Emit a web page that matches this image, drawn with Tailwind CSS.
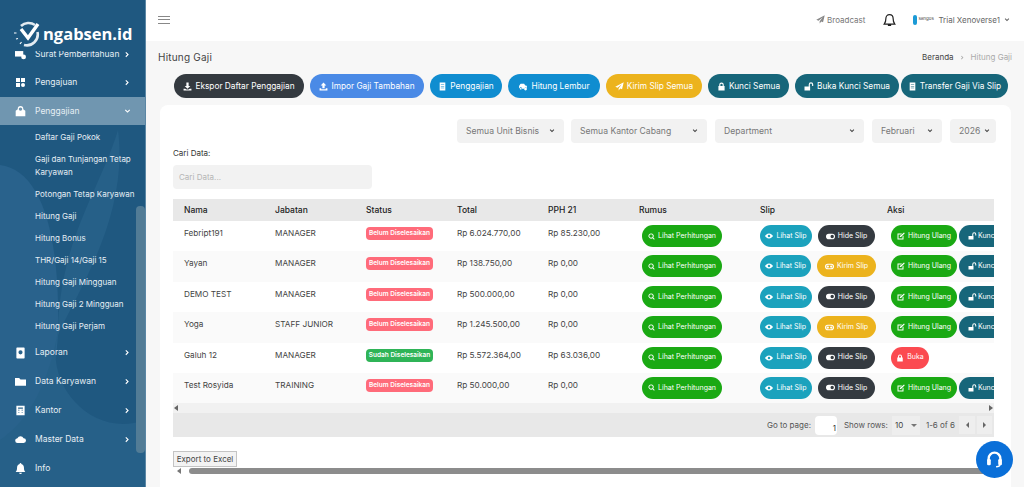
<!DOCTYPE html>
<html lang="id">
<head>
<meta charset="UTF-8">
<meta name="viewport" content="width=device-width, initial-scale=1.0">
<script src="https://cdn.jsdelivr.net/npm/@tailwindcss/browser@4"></script>
<title>Hitung Gaji</title>
</head>
<body class="font-['Inter','Liberation_Sans',sans-serif] bg-[#f7f7f7] overflow-hidden">

<svg class="hidden">
  <symbol id="i-download" viewBox="0 0 16 16"><path d="M6 1h4v6h3l-5 5-5-5h3zM1 12h3l2 1.500h4L12 12h3v3H1z"/></symbol>
  <symbol id="i-upload" viewBox="0 0 16 16"><path d="M8 1l5 5h-3v5H6V6H3zM1 11h3v2h8v-2h3v4H1z"/></symbol>
  <symbol id="i-receipt" viewBox="0 0 16 16"><path fill-rule="evenodd" d="M3 1h10v14H3zM5 4v1h6V4zM5 7v1h6V7zM5 10v1h6v-1z"/></symbol>
  <symbol id="i-car" viewBox="0 0 16 16"><path d="M3 4a1 1 0 0 1 1-1h6l2 3h1a2 2 0 0 1 2 2v2h-1.500a2 2 0 0 0-3 2H6a2 2 0 0 0-4-1H1V7z"/><circle cx="4" cy="12" r="1.500"/><circle cx="12.500" cy="12.500" r="2.500"/></symbol>
  <symbol id="i-plane" viewBox="0 0 16 16"><path d="M15.500 .5L.5 8.500l4 1.700L12 4 6.500 11v4l2.800-3.300 3.200 1.300z"/></symbol>
  <symbol id="i-lock" viewBox="0 0 16 16"><path fill-rule="evenodd" d="M4 7V5a4 4 0 0 1 8 0v2h1.500v8h-11V7zM6 7h4V5a2 2 0 0 0-4 0z"/></symbol>
  <symbol id="i-unlock" viewBox="0 0 16 16"><path d="M0 8h10v7H0zM7.500 8V4.500a4 4 0 0 1 8 0V7h-2V4.500a2 2 0 0 0-4 0V8z"/></symbol>
  <symbol id="i-search" viewBox="0 0 16 16"><path fill-rule="evenodd" d="M7 1a6 6 0 1 0 3.500 10.900l3.300 3.300 1.400-1.400-3.300-3.300A6 6 0 0 0 7 1zM7 3a4 4 0 1 1 0 8 4 4 0 0 1 0-8z"/></symbol>
  <symbol id="i-eye" viewBox="0 0 16 16"><path fill-rule="evenodd" d="M8 3c4 0 7 3.500 8 5-1 1.500-4 5-8 5S1 9.500 0 8c1-1.500 4-5 8-5zM8 5.500a2.500 2.500 0 1 0 0 5 2.500 2.500 0 0 0 0-5z"/></symbol>
  <symbol id="i-toggle-on" viewBox="0 0 16 16"><path fill-rule="evenodd" d="M5 3h6a5 5 0 0 1 0 10H5A5 5 0 0 1 5 3zM11 5a3 3 0 1 0 0 6 3 3 0 0 0 0-6z"/></symbol>
  <symbol id="i-toggle-off" viewBox="0 0 16 16"><path fill-rule="evenodd" d="M5 3h6a5 5 0 0 1 0 10H5A5 5 0 0 1 5 3zM5 5a3 3 0 0 0 0 6h6a3 3 0 0 0 0-6z"/><circle cx="5" cy="8" r="2"/><circle cx="11" cy="8" r="2"/></symbol>
  <symbol id="i-edit" viewBox="0 0 16 16"><path d="M1 3h9L8 5H3v8h8V9l2-2v8H1zM14 .8l1.500 1.500L8 10H5.800V7.800z"/></symbol>
  <symbol id="i-chev-r" viewBox="0 0 16 16"><path d="M5 2l6 6-6 6-1.800-1.800L7.400 8 3.200 3.800z"/></symbol>
  <symbol id="i-chev-d" viewBox="0 0 16 16"><path d="M2 5l6 6 6-6-1.800-1.800L8 7.400 3.800 3.200z"/></symbol>
  <symbol id="i-bell" viewBox="0 0 16 16"><path d="M8 0a1.200 1.200 0 0 1 1.200 1.300C11.500 1.900 13 4 13 6.500c0 4 1 5 2 6.500H1c1-1.500 2-2.500 2-6.500 0-2.500 1.500-4.600 3.800-5.200A1.200 1.200 0 0 1 8 0zM6 14h4a2 2 0 0 1-4 0z"/></symbol>
  <symbol id="i-mail" viewBox="0 0 16 16"><path fill-rule="evenodd" d="M1 7l3-2.400V4a4 4 0 0 1 8 0v.6L15 7v8H1zM8 2a2.500 2.500 0 1 0 0 5 2.500 2.500 0 0 0 0-5z"/></symbol>
  <symbol id="i-surat" viewBox="0 0 16 16"><path d="M0 3h12v8H0z"/><circle cx="12.500" cy="11.500" r="3.500"/></symbol>
  <symbol id="i-book" viewBox="0 0 16 16"><path fill-rule="evenodd" d="M3 0h10a1 1 0 0 1 1 1v14a1 1 0 0 1-1 1H3a1 1 0 0 1-1-1V1a1 1 0 0 1 1-1zM8 4a3 3 0 1 0 0 6 3 3 0 0 0 0-6z"/></symbol>
  <symbol id="i-building" viewBox="0 0 16 16"><path fill-rule="evenodd" d="M2 1h12v14H2zM4.500 3.500v2h7v-2zM4.500 7v1h2V7zM9.500 7v1h2V7zM4.500 10v1h2v-1zM9.500 10v1h2v-1z"/></symbol>
</svg>

<div class="flex h-[487px]">
  <!-- sidebar -->
  <aside class="relative w-[146px] shrink-0 h-full overflow-hidden bg-[#1f5880] border-r border-[#5b87a5] text-white">
    <svg class="absolute inset-0 w-full h-full" viewBox="0 0 145 487" preserveAspectRatio="none">
      <path d="M0 165C40 170 60 230 58 330 56 400 30 440 0 460z" fill="#29628c"/>
      <path d="M118 130C128 210 85 280 60 330 40 380 90 440 145 420V487H0V440C30 420 50 380 58 330 60 240 100 190 118 130z" fill="#266088"/>
    </svg>
    <div class="absolute right-0 top-[206px] w-[9px] h-[247px] rounded bg-[#527c96]"></div>

    <nav class="relative pt-[40px] text-[8.500px] text-[#e6eef4]">
      <a class="h-[28px] flex items-center"><svg class="shrink-0 w-[11px] h-[11px] ml-[15px] mr-[9px] fill-white"><use href="#i-surat"/></svg><span class="flex-1 whitespace-nowrap">Surat Pemberitahuan</span><svg class="shrink-0 w-[7px] h-[7px] mr-[14px] fill-white"><use href="#i-chev-r"/></svg></a>
      <a class="h-[29px] flex items-center"><span class="shrink-0 ml-[16px] mr-[10px] grid grid-cols-2 gap-[1px] w-[9px]"><i class="w-[4px] h-[4px] bg-white"></i><i class="w-[4px] h-[4px] bg-white"></i><i class="w-[4px] h-[4px] bg-white"></i><i class="w-[4px] h-[4px] bg-white rounded-full"></i></span><span class="flex-1">Pengajuan</span><svg class="shrink-0 w-[7px] h-[7px] mr-[14px] fill-white"><use href="#i-chev-r"/></svg></a>
      <a class="h-[28px] flex items-center bg-[#7096b0]"><svg class="shrink-0 w-[11px] h-[11px] ml-[15px] mr-[9px] fill-white"><use href="#i-mail"/></svg><span class="flex-1">Penggajian</span><svg class="shrink-0 w-[7px] h-[7px] mr-[14px] fill-white"><use href="#i-chev-d"/></svg></a>
      <ul class="pl-[35px] pr-[12px] pt-[1px] text-[8px] leading-[13px] pb-[1px]">
        <li class="py-[4.500px]">Daftar Gaji Pokok</li>
        <li class="py-[4.500px]">Gaji dan Tunjangan Tetap Karyawan</li>
        <li class="py-[4.500px] whitespace-nowrap">Potongan Tetap Karyawan</li>
        <li class="py-[4.500px]">Hitung Gaji</li>
        <li class="py-[4.500px]">Hitung Bonus</li>
        <li class="py-[4.500px]">THR/Gaji 14/Gaji 15</li>
        <li class="py-[4.500px]">Hitung Gaji Mingguan</li>
        <li class="py-[4.500px]">Hitung Gaji 2 Mingguan</li>
        <li class="py-[4.500px]">Hitung Gaji Perjam</li>
      </ul>
      <a class="h-[29px] flex items-center"><svg class="shrink-0 w-[11px] h-[12px] ml-[15px] mr-[9px] fill-white"><use href="#i-book"/></svg><span class="flex-1">Laporan</span><svg class="shrink-0 w-[7px] h-[7px] mr-[14px] fill-white"><use href="#i-chev-r"/></svg></a>
      <a class="h-[29px] flex items-center"><svg class="shrink-0 w-[11px] h-[11px] ml-[15px] mr-[9px] fill-white" viewBox="0 0 16 16"><path d="M0 3h6l2 2h8v9H0z"/></svg><span class="flex-1">Data Karyawan</span><svg class="shrink-0 w-[7px] h-[7px] mr-[14px] fill-white"><use href="#i-chev-r"/></svg></a>
      <a class="h-[29px] flex items-center"><svg class="shrink-0 w-[11px] h-[11px] ml-[15px] mr-[9px] fill-white"><use href="#i-building"/></svg><span class="flex-1">Kantor</span><svg class="shrink-0 w-[7px] h-[7px] mr-[14px] fill-white"><use href="#i-chev-r"/></svg></a>
      <a class="h-[29px] flex items-center"><svg class="shrink-0 w-[11px] h-[11px] ml-[15px] mr-[9px] fill-white" viewBox="0 0 16 16"><path d="M4 13a3.500 3.500 0 0 1-.5-7A5 5 0 0 1 12.500 6 3.500 3.500 0 0 1 12.500 13z"/></svg><span class="flex-1">Master Data</span><svg class="shrink-0 w-[7px] h-[7px] mr-[14px] fill-white"><use href="#i-chev-r"/></svg></a>
      <a class="h-[28px] flex items-center"><svg class="shrink-0 w-[11px] h-[11px] ml-[15px] mr-[9px] fill-white"><use href="#i-bell"/></svg><span class="flex-1">Info</span></a>
    </nav>

    <!-- logo sits over the scrolled menu -->
    <div class="absolute top-0 left-0 right-0 h-[51px] bg-[#1f5880] flex items-center pl-[13px] pt-[17px]">
      <svg class="w-[29px] h-[26px] shrink-0" viewBox="0 0 29 26" fill="none" stroke="#fff">
        <path d="M8 5a11 11 0 0 1 14-1M24.500 11A11 11 0 0 1 11 24" stroke-width="2.600" stroke="#e3ebf1"/>
        <path d="M8 8l7 9L25 3" stroke-width="3.400"/>
        <path d="M1 12h2.500M3 18l2-.5M7 23l1.500-2" stroke-width="1.200"/>
      </svg>
      <span class="font-['Open_Sans',sans-serif] font-bold text-[16.500px] leading-none text-white ml-[1px]">ngabsen.id</span>
    </div>
  </aside>

  <div class="flex-1 min-w-0 flex flex-col">
    <!-- top bar -->
    <header class="h-[41px] shrink-0 bg-white flex items-center pl-[12px] pr-[14px] pb-[2px]">
      <div class="w-[12px] flex flex-col gap-[2.500px]"><i class="h-[1px] bg-[#888]"></i><i class="h-[1px] bg-[#888]"></i><i class="h-[1px] bg-[#888]"></i></div>
      <div class="flex-1"></div>
      <svg class="w-[9px] h-[9px] fill-[#888]"><use href="#i-plane"/></svg>
      <span class="ml-[2px] text-[8px] text-[#777]">Broadcast</span>
      <svg class="ml-[18px] w-[13px] h-[14px]" viewBox="0 0 16 16" fill="none" stroke="#222" stroke-width="1.500"><path d="M8 1.500c2.800 0 4.500 2.200 4.500 5 0 4 1 5 2 6.500h-13c1-1.500 2-2.500 2-6.500 0-2.800 1.700-5 4.500-5zM6 14.500h4"/></svg>
      <span class="ml-[17px] w-[18px] flex items-center"><i class="shrink-0 w-[4px] h-[10px] rounded-sm bg-[#1b9ad6]"></i><span class="text-[4.500px] text-[#444] ml-[1px]">sangos</span></span>
      <span class="ml-[7px] text-[8px] text-[#666]">Trial Xenoverse1</span>
      <svg class="ml-[4px] w-[6px] h-[6px] fill-[#666]"><use href="#i-chev-d"/></svg>
    </header>

    <main class="flex-1 min-h-0 px-[13px] pl-[14px]">
      <div class="h-[33px] flex items-center justify-between pb-[1px]">
        <h1 class="-ml-[2px] text-[10px] text-[#444] tracking-[.2px]">Hitung Gaji</h1>
        <div class="flex items-center text-[8px] -mr-[1px]"><span class="text-[#444]">Beranda</span><svg class="mx-[6px] w-[5px] h-[5px] fill-[#aaa]"><use href="#i-chev-r"/></svg><span class="text-[#aaa]">Hitung Gaji</span></div>
      </div>

      <!-- action buttons -->
      <div class="flex ml-[14px] h-[24px] text-[8.300px] text-white whitespace-nowrap">
        <a class="w-[130px] rounded-full bg-[#343a40] flex items-center justify-center gap-[3px]"><svg class="w-[9px] h-[9px] fill-white"><use href="#i-download"/></svg>Ekspor Daftar Penggajian</a>
        <a class="w-[114px] ml-[6px] rounded-full bg-[#4a8ae6] flex items-center justify-center gap-[3px]"><svg class="w-[9px] h-[9px] fill-white"><use href="#i-upload"/></svg>Impor Gaji Tambahan</a>
        <a class="w-[72px] ml-[6px] rounded-full bg-[#108dd0] flex items-center justify-center gap-[3px]"><svg class="w-[9px] h-[9px] fill-white"><use href="#i-receipt"/></svg>Penggajian</a>
        <a class="w-[92px] ml-[6px] rounded-full bg-[#108dd0] flex items-center justify-center gap-[3px]"><svg class="w-[10px] h-[9px] fill-white"><use href="#i-car"/></svg>Hitung Lembur</a>
        <a class="w-[96px] ml-[6px] rounded-full bg-[#ecb31d] flex items-center justify-center gap-[3px]"><svg class="w-[9px] h-[9px] fill-white"><use href="#i-plane"/></svg>Kirim Slip Semua</a>
        <a class="w-[81px] ml-[6px] rounded-full bg-[#17667a] flex items-center justify-center gap-[3px]"><svg class="w-[9px] h-[9px] fill-white"><use href="#i-lock"/></svg>Kunci Semua</a>
        <a class="w-[104px] ml-[6px] rounded-full bg-[#17667a] flex items-center justify-center gap-[3px]"><svg class="w-[10px] h-[9px] fill-white"><use href="#i-unlock"/></svg>Buka Kunci Semua</a>
        <a class="w-[107px] ml-[2px] rounded-full bg-[#17667a] flex items-center justify-center gap-[3px]"><svg class="w-[9px] h-[9px] fill-white"><use href="#i-receipt"/></svg>Transfer Gaji Via Slip</a>
      </div>

      <!-- card -->
      <section class="relative mt-[7px] bg-white rounded-t-lg h-[400px] pl-[13px] pr-[15px] pt-[14px]">
        <div class="flex justify-end h-[24px] text-[8.600px] text-[#777]">
          <div class="w-[107px] rounded bg-[#f2f2f2] flex items-center justify-between px-[9px]">Semua Unit Bisnis<svg class="w-[6px] h-[6px] fill-[#444]"><use href="#i-chev-d"/></svg></div>
          <div class="w-[136px] ml-[7px] rounded bg-[#f2f2f2] flex items-center justify-between px-[9px]">Semua Kantor Cabang<svg class="w-[6px] h-[6px] fill-[#444]"><use href="#i-chev-d"/></svg></div>
          <div class="w-[149px] ml-[8px] rounded bg-[#f2f2f2] flex items-center justify-between px-[9px]">Department<svg class="w-[6px] h-[6px] fill-[#444]"><use href="#i-chev-d"/></svg></div>
          <div class="w-[70px] ml-[8px] rounded bg-[#f2f2f2] flex items-center justify-between px-[9px]">Februari<svg class="w-[6px] h-[6px] fill-[#444]"><use href="#i-chev-d"/></svg></div>
          <div class="w-[46px] ml-[8px] rounded bg-[#f2f2f2] flex items-center justify-between pl-[9px] pr-[6px]">2026<svg class="w-[6px] h-[6px] fill-[#444]"><use href="#i-chev-d"/></svg></div>
        </div>
        <label class="block mt-[4px] text-[8px] leading-[12px] text-[#333]">Cari Data:</label>
        <div class="mt-[6px] w-[199px] h-[24px] rounded bg-[#f2f2f2] flex items-center px-[6px] text-[8px] text-[#b5b5b5]">Cari Data...</div>

        <!-- table -->
        <div class="mt-[10px] w-[821px] overflow-hidden">
          <table class="w-[1000px] table-fixed border-collapse text-left text-[8.200px] text-[#444]">
            <colgroup><col class="w-[91px]"><col class="w-[91px]"><col class="w-[91px]"><col class="w-[91px]"><col class="w-[91px]"><col class="w-[121px]"><col class="w-[127px]"><col></colgroup>
            <thead>
              <tr class="h-[22px] bg-[#e8e8e8] text-[8.500px] text-[#222]">
                <th class="pl-[11px] font-medium">Nama</th><th class="pl-[11px] font-medium">Jabatan</th><th class="pl-[11px] font-medium">Status</th><th class="pl-[11px] font-medium">Total</th><th class="pl-[11px] font-medium">PPH 21</th><th class="pl-[11px] font-medium">Rumus</th><th class="pl-[11px] font-medium">Slip</th><th class="pl-[11px] font-medium">Aksi</th>
              </tr>
            </thead>
            <tbody id="rows"></tbody>
          </table>
        </div>

        <!-- inner scrollbar + pager -->
        <div class="w-[821px] h-[10px] bg-[#f1f1f1] flex items-center justify-between px-[1px]">
          <i class="border-y-[3px] border-y-transparent border-r-[4px] border-r-[#666]"></i>
          <i class="border-y-[3px] border-y-transparent border-l-[4px] border-l-[#666]"></i>
        </div>
        <div class="w-[821px] h-[24px] bg-[#e8e8e8] flex items-center justify-end text-[8px] text-[#555]">
          <span>Go to page:</span>
          <span class="ml-[4px] w-[22px] h-[19px] bg-white rounded-sm flex items-end justify-end pr-[1px] pb-[1px] text-[#333]">1</span>
          <span class="ml-[7px]">Show rows:</span>
          <span class="ml-[4px] w-[28px] h-[19px] bg-[#eeeeee] flex items-center justify-between px-[3px] text-[#444]">10<i class="border-x-[3px] border-x-transparent border-t-[3px] border-t-[#777]"></i></span>
          <span class="ml-[6px]">1-6 of 6</span>
          <span class="ml-[4px] w-[16px] h-[18px] bg-[#eeeeee] flex items-center justify-center"><i class="border-y-[3px] border-y-transparent border-r-[3px] border-r-[#666]"></i></span>
          <span class="ml-[2px] mr-[2px] w-[15px] h-[18px] bg-[#eeeeee] flex items-center justify-center"><i class="border-y-[3px] border-y-transparent border-l-[3px] border-l-[#666]"></i></span>
        </div>

        <button class="block mt-[14px] w-[64px] h-[16px] bg-[#f3f3f3] border border-[#c4c4c4] text-[8px] text-[#444] leading-none">Export to Excel</button>
        <div class="w-[821px] h-[8px] flex items-center">
          <i class="ml-[4px] border-y-[3px] border-y-transparent border-r-[4px] border-r-[#777]"></i>
          <i class="ml-[8px] flex-1 h-[6px] rounded-full bg-[#8c8c8c]"></i>
        </div>
      </section>
    </main>
  </div>
</div>

<!-- chat button -->
<a class="fixed left-[976px] top-[441px] w-[37px] h-[37px] rounded-full bg-[#0a6fd8] flex items-center justify-center">
  <svg class="w-[17px] h-[17px]" viewBox="0 0 16 16" fill="none" stroke="#fff"><path d="M2.500 9V7a5.500 5.500 0 0 1 11 0v2" stroke-width="2.200"/><rect x="1" y="7.500" width="3.500" height="6" rx="1.200" fill="#fff" stroke="none"/><rect x="11.500" y="7.500" width="3.500" height="6" rx="1.200" fill="#fff" stroke="none"/><path d="M13 13c0 1.200-1.500 1.800-3.500 1.800" stroke-width="1.400"/></svg>
</a>

<script>
  const data = [
    { nama: 'Febript191', jabatan: 'MANAGER', selesai: false, total: 'Rp 6.024.770,00', pph: 'Rp 85.230,00', kirim: false },
    { nama: 'Yayan', jabatan: 'MANAGER', selesai: false, total: 'Rp 138.750,00', pph: 'Rp 0,00', kirim: true },
    { nama: 'DEMO TEST', jabatan: 'MANAGER', selesai: false, total: 'Rp 500.000,00', pph: 'Rp 0,00', kirim: false },
    { nama: 'Yoga', jabatan: 'STAFF JUNIOR', selesai: false, total: 'Rp 1.245.500,00', pph: 'Rp 0,00', kirim: true },
    { nama: 'Galuh 12', jabatan: 'MANAGER', selesai: true, total: 'Rp 5.572.364,00', pph: 'Rp 63.036,00', kirim: false },
    { nama: 'Test Rosyida', jabatan: 'TRAINING', selesai: false, total: 'Rp 50.000,00', pph: 'Rp 0,00', kirim: false },
  ];

  function slipButton(r) {
    if (r.kirim) {
      return `<a class="ml-[6px] w-[60px] h-[22px] rounded-full bg-[#ecb31d] text-white flex items-center justify-center gap-[3px]"><svg class="w-[9px] h-[9px] fill-white"><use href="#i-toggle-off"/></svg>Kirim Slip</a>`;
    }
    return `<a class="ml-[6px] w-[57px] h-[22px] rounded-full bg-[#343a40] text-white flex items-center justify-center gap-[3px]"><svg class="w-[9px] h-[9px] fill-white"><use href="#i-toggle-on"/></svg>Hide Slip</a>`;
  }

  function aksiButtons(r) {
    if (r.selesai) {
      return `<a class="ml-[4px] w-[38px] h-[22px] rounded-full bg-[#fb4a50] text-white flex items-center justify-center gap-[3px]"><svg class="w-[8px] h-[8px] fill-white"><use href="#i-lock"/></svg>Buka</a>`;
    }
    return `<a class="ml-[4px] w-[66px] h-[22px] rounded-full bg-[#1aa913] text-white flex items-center justify-center gap-[3px]"><svg class="w-[8px] h-[8px] fill-white"><use href="#i-edit"/></svg>Hitung Ulang</a>
      <a class="ml-[2px] w-[56px] h-[22px] rounded-full bg-[#17667a] text-white flex items-center pl-[9px] gap-[1px]"><svg class="w-[9px] h-[8px] fill-white"><use href="#i-unlock"/></svg>Kunci</a>`;
  }

  document.getElementById('rows').innerHTML = data.map((r, i) => `
    <tr class="h-[30.400px] align-top ${i % 2 ? 'bg-[#fafafa]' : 'bg-white'}">
      <td class="pl-[11px] pt-[6px]">${r.nama}</td>
      <td class="pl-[11px] pt-[6px]">${r.jabatan}</td>
      <td class="pl-[11px] pt-[6px]"><span class="${r.selesai ? 'bg-[#2fb457]' : 'bg-[#ff6b7a]'} block w-[67px] h-[13px] rounded-sm text-center text-[6.500px] leading-[13px] font-semibold text-white whitespace-nowrap">${r.selesai ? 'Sudah Diselesaikan' : 'Belum Diselesaikan'}</span></td>
      <td class="pl-[11px] pt-[6px]">${r.total}</td>
      <td class="pl-[11px] pt-[6px] whitespace-nowrap">${r.pph}</td>
      <td class="pl-[14px] pt-[4px]"><a class="w-[80px] h-[22px] rounded-full bg-[#1aa913] text-white text-[7px] flex items-center justify-center gap-[3px] whitespace-nowrap"><svg class="w-[7px] h-[7px] fill-white"><use href="#i-search"/></svg>Lihat Perhitungan</a></td>
      <td class="pl-[11px] pt-[4px]"><div class="flex text-[7px] whitespace-nowrap"><a class="w-[52px] h-[22px] rounded-full bg-[#1ba2bd] text-white flex items-center justify-center gap-[3px]"><svg class="w-[8px] h-[8px] fill-white"><use href="#i-eye"/></svg>Lihat Slip</a>${slipButton(r)}</div></td>
      <td class="pl-[11px] pt-[4px]"><div class="flex text-[7px] whitespace-nowrap">${aksiButtons(r)}</div></td>
    </tr>`).join('');
</script>
</body>
</html>
